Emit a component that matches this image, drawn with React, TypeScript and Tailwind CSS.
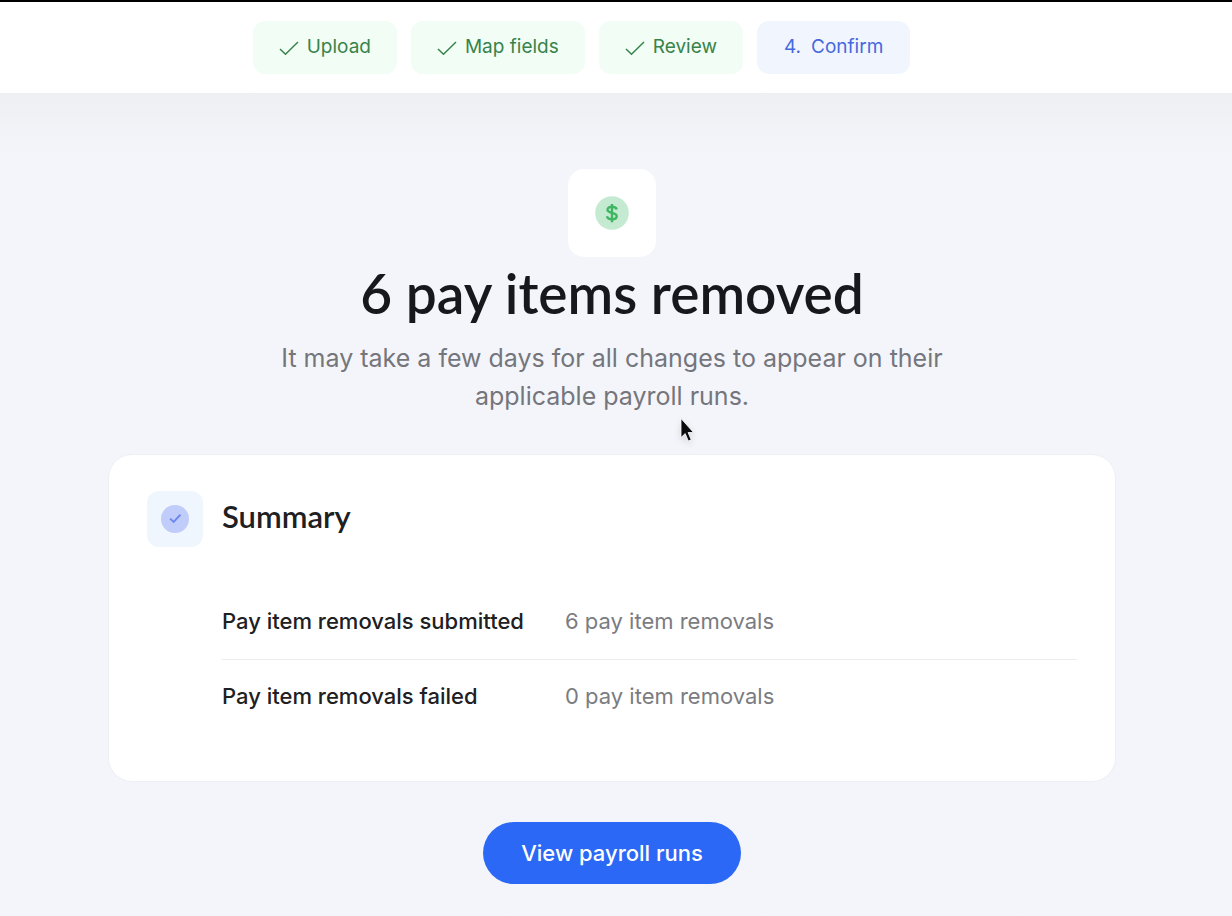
import React from 'react';

const doneSteps = ['Upload', 'Map fields', 'Review'];

const summaryRows = [
  { label: 'Pay item removals submitted', value: '6 pay item removals' },
  { label: 'Pay item removals failed', value: '0 pay item removals' },
];

const StepCheck = () => (
  <svg width="20" height="16" viewBox="0 0 20 16" fill="none" stroke="currentColor" strokeWidth="1.5" aria-hidden="true">
    <path d="M1 9 L6.5 14.3 L19 2" />
  </svg>
);

const DollarBadge = () => (
  <svg width="34" height="34" viewBox="0 0 34 34" fill="none" aria-hidden="true">
    <circle cx="17" cy="17" r="16.8" fill="#c5ead2" />
    <path
      d="M21.7 13.6 C21.3 11.7 19.5 10.8 17 10.8 C14.4 10.8 12.5 11.9 12.5 13.8 C12.5 15.8 14.4 16.3 17 16.9 C19.9 17.5 21.7 18.2 21.7 20.3 C21.7 22.2 19.7 23.3 17 23.3 C14.3 23.3 12.4 22.3 12 20.3 M17 8 V26.2"
      stroke="#3fb562"
      strokeWidth="2.4"
    />
  </svg>
);

const CheckBadge = () => (
  <svg width="28" height="28" viewBox="0 0 28 28" fill="none" aria-hidden="true">
    <circle cx="14" cy="14" r="14" fill="#c0ccfa" />
    <path d="M9.2 13.6 L12.6 16.9 L19.4 9.8" stroke="#6f89ec" strokeWidth="2" />
  </svg>
);

const Pointer = () => (
  <svg
    className="pointer-events-none absolute left-[679px] top-[416px] drop-shadow-md"
    width="18"
    height="28"
    viewBox="0 0 18 28"
    aria-hidden="true"
  >
    <path
      d="M2 2.5 V21.5 L6.2 17.6 L9.3 25 L12.2 23.8 L9.1 16.5 H14.5 Z"
      fill="#0b0b0d"
      stroke="#ffffff"
      strokeWidth="0.8"
    />
  </svg>
);

const App = () => {
  return (
    <div className="relative min-h-screen bg-[#f4f5fa] font-['Inter',sans-serif] text-[#202022]">
      <header className="border-t-2 border-black bg-white py-[19px] pr-[69px]">
        <ol className="flex justify-center gap-[14px] text-[19px]">
          {doneSteps.map((step) => (
            <li key={step} className="flex h-[53px] items-center gap-2 rounded-xl bg-[#f1fdf5] px-[26px] text-[#38834a]">
              <StepCheck />
              {step}
            </li>
          ))}
          <li aria-current="step" className="flex h-[53px] items-center gap-[10px] rounded-xl bg-[#f1f6fe] px-[27px] text-[#4668df]">
            <span>4.</span>
            Confirm
          </li>
        </ol>
      </header>

      <main className="bg-linear-to-b from-[#eeeff2] to-[#f4f5fa] to-[60px] pb-8 pl-[108px] pr-[116px] pt-[76px]">
        {/* Result */}
        <div className="flex flex-col items-center text-center">
          <div className="flex h-[88px] w-[88px] items-center justify-center rounded-2xl bg-white">
            <DollarBadge />
          </div>
          <h1 className="mt-1 font-['Lato',sans-serif] text-[55px] font-semibold leading-[64px] text-[#17181c]">
            6 pay items removed
          </h1>
          <p className="mt-[14px] max-w-[700px] text-[25px] leading-[38px] text-[#74767c]">
            It may take a few days for all changes to appear on their applicable payroll runs.
          </p>
        </div>

        {/* Summary */}
        <section className="mt-[39px] rounded-3xl border border-[#eeeff3] bg-white px-[38px] pb-12 pt-9">
          <div className="flex items-start gap-[19px]">
            <div className="flex h-14 w-14 items-center justify-center rounded-xl bg-[#f0f6fe]">
              <CheckBadge />
            </div>
            <h2 className="font-['Lato',sans-serif] text-[31px] font-semibold leading-[50px]">Summary</h2>
          </div>
          <div className="ml-[75px] mt-[38px]">
            <table className="w-full text-left text-[22px]">
              <tbody>
                {summaryRows.map((row) => (
                  <tr key={row.label} className="h-[74px] border-b border-[#ececef] last:border-b-0">
                    <th scope="row" className="w-[343px] font-medium">{row.label}</th>
                    <td className="text-[#7b7c81]">{row.value}</td>
                  </tr>
                ))}
              </tbody>
            </table>
          </div>
        </section>

        <div className="mt-10 flex justify-center">
          <button type="button" className="h-[62px] rounded-full bg-[#2a68f5] px-[38px] text-[22px] font-medium text-white">
            View payroll runs
          </button>
        </div>
      </main>

      <Pointer />
    </div>
  );
};

export default App;
